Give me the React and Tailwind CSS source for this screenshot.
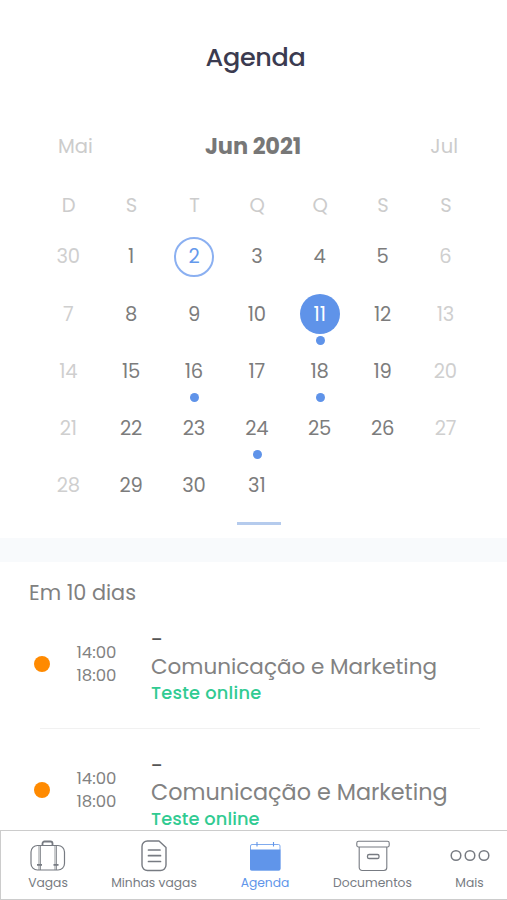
import React, { useState } from 'react'

const weekDays = ['D', 'S', 'T', 'Q', 'Q', 'S', 'S']

const days = [30, ...Array.from({ length: 31 }, (_, i) => i + 1)]

const daysWithEvents = [11, 16, 18, 24]

const events = [
  {
    id: 1,
    start: '14:00',
    end: '18:00',
    title: 'Comunicação e Marketing',
    titleClass: 'text-[21.5px]',
    type: 'Teste online',
    typeClass: 'tracking-[0.25px]',
  },
  {
    id: 2,
    start: '14:00',
    end: '18:00',
    title: 'Comunicação e Marketing',
    titleClass: 'text-[22.3px]',
    type: 'Teste online',
    typeClass: 'tracking-[0.1px]',
  },
]

const SuitcaseIcon = () => (
  <svg width="36" height="32" viewBox="0 0 36 32" fill="none" stroke="currentColor" strokeWidth="1.2">
    <rect x="1" y="5.5" width="33.5" height="24.5" rx="6.5" />
    <path d="M12.5 5.5V3.5a2 2 0 0 1 2-2h6a2 2 0 0 1 2 2v2" strokeWidth="1.8" />
    <path d="M9 5.500V30M10.500 5.500V30M25 5.500V30M26.500 5.500V30" strokeWidth="0.8" />
    <path d="M7 24.800h5M23.500 24.800h5" strokeWidth="1.8" />
  </svg>
)

const DocIcon = () => (
  <svg width="26" height="32" viewBox="0 0 26 32" fill="none" stroke="currentColor" strokeWidth="1.4">
    <path
      d="M6.500 1h11.500l7 6.500V25a5.500 5.500 0 0 1-5.500 5.500h-13A5.500 5.500 0 0 1 1 25V6.500A5.500 5.500 0 0 1 6.500 1Z"
      strokeLinejoin="round"
    />
    <path d="M7.500 10h11.500M7.500 15.700h12M7.500 21.500h12" strokeWidth="1.7" strokeLinecap="round" />
  </svg>
)

const CalendarIcon = () => (
  <svg width="32" height="32" viewBox="0 0 32 32" fill="none" stroke="currentColor">
    <rect x="1.500" y="4.500" width="29.500" height="25.500" rx="1.500" strokeWidth="0.8" />
    <path
      d="M1 9.500h30.400V29a1.500 1.500 0 0 1-1.500 1.500H2.500A1.500 1.500 0 0 1 1 29Z"
      fill="currentColor"
      stroke="none"
    />
    <path d="M8 2v4.500M24.500 2v4.500" strokeWidth="1.1" />
  </svg>
)

const BoxIcon = () => (
  <svg width="34" height="32" viewBox="0 0 34 32" fill="none" stroke="currentColor" strokeWidth="1.1">
    <rect x=".8" y="1.2" width="32.4" height="5.8" rx="1.8" />
    <path d="M3.200 7v20.500a3 3 0 0 0 3 3h21.600a3 3 0 0 0 3-3V7" />
    <rect x="11.5" y="14.5" width="11.5" height="4" rx="1.6" strokeWidth="1.3" />
  </svg>
)

const MoreIcon = () => (
  <svg width="40" height="32" viewBox="0 0 40 32" fill="none" stroke="currentColor" strokeWidth="1.5">
    <circle cx="6" cy="15.5" r="4.8" />
    <circle cx="20" cy="15.5" r="4.8" />
    <circle cx="34" cy="15.5" r="4.8" />
  </svg>
)

const tabs = [
  { key: 'vagas', label: 'Vagas', icon: SuitcaseIcon, className: 'w-[94px]' },
  { key: 'minhas', label: 'Minhas vagas', icon: DocIcon, className: 'w-[118px]' },
  { key: 'agenda', label: 'Agenda', icon: CalendarIcon, className: 'w-[104px]' },
  { key: 'documentos', label: 'Documentos', icon: BoxIcon, className: 'w-[111px]' },
  { key: 'mais', label: 'Mais', icon: MoreIcon, className: 'w-[79px] pl-1' },
]

const Day = ({ day, index, selected, onSelect }) => {
  const isWeekend = index % 7 === 0 || index % 7 === 6
  let style = isWeekend ? 'text-[#cfcfcf]' : 'text-[#7c7c7c]'
  if (index === 2) style = 'border-2 border-[#8bb0f1] text-[#6499ec]'
  if (selected) style = 'bg-[#5f93e9] text-white'

  return (
    <div className="relative flex items-center justify-center">
      <button
        onClick={() => onSelect(day)}
        className={`flex h-10 w-10 items-center justify-center rounded-full pt-px pr-px text-[19.5px] tracking-[-0.2px] ${style}`}
      >
        {day}
      </button>
      {daysWithEvents.includes(day) && (
        <span className="absolute top-[50.5px] h-[9px] w-[9px] rounded-full bg-[#5f93e9]" />
      )}
    </div>
  )
}

const Calendar = () => {
  const [selected, setSelected] = useState(11)

  return (
    <section className="h-[424px] shrink-0">
      <div className="grid h-16 grid-cols-3 items-center pt-0.5 pr-[49px] pl-[58px] text-[19.5px] text-[#cccccc]">
        <span>Mai</span>
        <span className="-ml-2.5 text-center text-[22.5px] font-bold tracking-[-0.1px] text-[#777777]">
          Jun 2021
        </span>
        <span className="text-right">Jul</span>
      </div>
      <div className="ml-[37.3px] grid h-[50px] w-[440px] grid-cols-7 items-center pt-1.5 text-center text-[19.5px] text-[#cccccc]">
        {weekDays.map((day, i) => (
          <span key={i}>{day}</span>
        ))}
      </div>
      <div className="ml-[37.3px] grid w-[440px] auto-rows-[57.2px] grid-cols-7">
        {days.map((day, i) => (
          <Day
            key={i}
            day={day}
            index={i}
            selected={i > 0 && day === selected}
            onSelect={setSelected}
          />
        ))}
      </div>
      <div className="mt-2 ml-[237px] h-[3px] w-11 bg-[#b5cbed]" />
    </section>
  )
}

const Event = ({ event }) => (
  <li className="h-[126px]">
    <div className="flex h-[106px] items-start pl-[34px]">
      <span className="mt-[34px] h-4 w-4 rounded-full bg-[#ff8a00]" />
      <div className="mt-[19px] ml-[26.5px] w-[74.5px] text-[16.5px] leading-[23px] text-[#828282]">
        <p>{event.start}</p>
        <p>{event.end}</p>
      </div>
      <div className="mt-[5px] whitespace-nowrap">
        <p className="text-[22px] leading-[26px] text-[#555555]">-</p>
        <p className={`leading-7 text-[#828282] ${event.titleClass}`}>{event.title}</p>
        <p className={`text-[17.8px] leading-6 font-medium text-[#31cb92] ${event.typeClass}`}>{event.type}</p>
      </div>
    </div>
    <div className="mr-[27px] ml-10 h-px bg-[#f1f1f1]" />
  </li>
)

const App = () => {
  const [tab, setTab] = useState('agenda')

  return (
    <div className="flex h-[900px] w-[507px] flex-col overflow-hidden bg-white font-[Poppins,Inter,sans-serif]">
      <header className="flex h-[114px] shrink-0 items-center justify-center pl-1 text-[#3b3b50]">
        <h1 className="text-[25.5px] font-medium tracking-[-0.3px]">Agenda</h1>
      </header>
      <Calendar />
      <div className="h-6 shrink-0 bg-[#f8fafc]" />
      <main className="min-h-0 flex-1 overflow-hidden">
        <h2 className="flex h-[60px] items-center pt-0.5 pl-[29px] text-[20.8px] text-[#808080]">Em 10 dias</h2>
        <ul>
          {events.map((event) => (
            <Event key={event.id} event={event} />
          ))}
        </ul>
      </main>
      <nav className="flex h-[70px] shrink-0 border border-r-0 border-[#cccccc] bg-white">
        {tabs.map(({ key, label, icon: Icon, className }) => (
          <button
            key={key}
            onClick={() => setTab(key)}
            className={`flex shrink-0 flex-col items-center pt-[9px] text-[12.3px] leading-[22px] whitespace-nowrap ${className} ${
              tab === key ? 'text-[#6095ea]' : 'text-[#777b82]'
            }`}
          >
            <Icon />
            {label}
          </button>
        ))}
      </nav>
    </div>
  )
}

export default App
